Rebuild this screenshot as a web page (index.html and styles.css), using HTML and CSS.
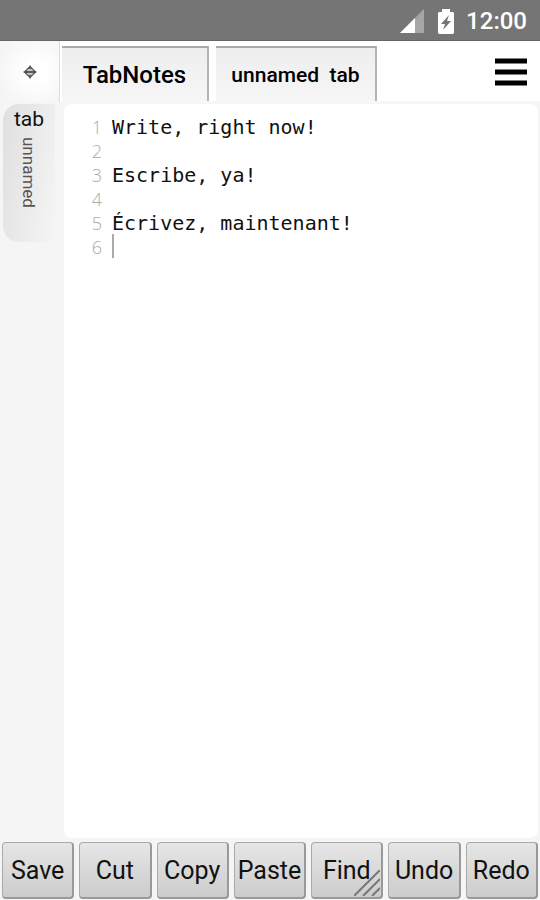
FILE: index.html
```
<!DOCTYPE html>
<html lang="en">
<head>
<meta charset="utf-8">
<meta name="viewport" content="width=device-width, initial-scale=1">
<title>TabNotes</title>
<link rel="stylesheet" href="styles.css">
</head>
<body>
<div class="app">
  <div class="status">
    <svg class="signal" viewBox="0 0 24 24" aria-hidden="true"><path d="M24 0V24H0Z" fill="#a6a6a6"/><path d="M15 9V24H0Z" fill="#fff"/></svg>
    <svg class="battery" viewBox="0 0 16 25" aria-hidden="true"><path d="M4 0H12V3H15L16 4V24L15 25H1L0 24V4L1 3H4Z" fill="#fff"/><path d="M11 6L3 15H7L5 21L13 12H9Z" fill="#757575"/></svg>
    <time>12:00</time>
  </div>
  <header class="tabs">
    <button class="locate" type="button" aria-label="Move">
      <svg viewBox="0 0 14 14" aria-hidden="true"><path d="M7 0L9 3H5ZM7 14L5 11H9ZM0 7L3 5V9ZM14 7L11 5V9Z" fill="#555"/><circle cx="7" cy="7" r="4" fill="#c4c4c4" stroke="#555" stroke-width="1.4"/><path d="M3 7H11" stroke="#444" stroke-width="1.6"/></svg>
    </button>
    <button class="tab tab-main" type="button">TabNotes</button>
    <button class="tab tab-note" type="button">unnamed&nbsp; tab</button>
    <button class="menu" type="button" aria-label="Menu">
      <svg viewBox="0 0 34 30" aria-hidden="true"><path d="M1 4H33M1 15H33M1 26H33" stroke="#000" stroke-width="5"/></svg>
    </button>
  </header>
  <main class="workspace">
    <nav class="side">
      <button class="side-tab" type="button"><span>tab</span><span class="vertical">unnamed</span></button>
    </nav>
    <section class="editor">
      <ol class="lines"><li>1</li><li>2</li><li>3</li><li>4</li><li>5</li><li>6</li></ol>
      <div class="page">
        <textarea aria-label="Note" spellcheck="false">Write, right now!

Escribe, ya!

Écrivez, maintenant!
</textarea>
        <span class="caret"></span>
      </div>
    </section>
  </main>
  <footer class="toolbar">
    <button type="button">Save</button>
    <button type="button">Cut</button>
    <button type="button">Copy</button>
    <button type="button">Paste</button>
    <button type="button">Find<svg class="grip" viewBox="0 0 26 26" aria-hidden="true"><path d="M0 26L26 0M9 26L26 9M18 26L26 18" stroke="#777" stroke-width="2"/></svg></button>
    <button type="button">Undo</button>
    <button type="button">Redo</button>
  </footer>
</div>
</body>
</html>
```
FILE: styles.css
```
* { box-sizing: border-box; }
body { margin: 0; font-family: Roboto, "Liberation Sans", sans-serif; color: #111; }
button { margin: 0; padding: 0; border: 0; background: none; font: inherit; color: inherit; }
svg { display: block; }
.app { display: flex; flex-direction: column; min-height: 100vh; background: #f5f5f5; }

.status {
  display: flex; align-items: center; justify-content: flex-end;
  height: 41px; padding: 2px 13px 0 0; background: #757575; border-bottom: 1px solid #666;
  color: #fff; font-size: 24px; font-weight: 500;
}
.signal { width: 24px; height: 24px; margin-right: 14px; }
.battery { width: 16px; height: 25px; margin-right: 12px; }

.tabs { display: flex; height: 61px; padding-top: 5px; background: #fff; border-bottom: 1px solid #f8f8f8; }
.locate {
  display: grid; place-items: center; width: 60px; margin: -5px 2px -1px 0;
  border-right: 1px solid #ddd; background: radial-gradient(circle at 60% 50%, #fff 20%, #f4f4f4 90%);
}
.locate svg { width: 14px; height: 14px; }
.tab {
  border-top: 2px solid #aaa; border-right: 2px solid #b4b4b4;
  background: linear-gradient(#eee, #f6f6f6); color: #000; font-weight: 500;
}
.tab-main { width: 147px; margin-right: 7px; font-size: 24px; }
.tab-note { width: 161px; font-size: 21px; }
.menu { margin: 0 12px 4px auto; }
.menu svg { width: 34px; height: 30px; }

.workspace { flex: 1; display: flex; padding: 2px 2px 4px 0; }
.side { width: 64px; flex: none; }
.side-tab {
  display: flex; flex-direction: column; align-items: center; gap: 6px;
  width: 52px; height: 138px; margin-left: 3px; padding-top: 3px;
  border-radius: 16px 0 0 16px; background: linear-gradient(100deg, #dfdfdf, #f5f5f5);
  font-size: 21px; line-height: 24px;
}
.vertical { writing-mode: vertical-rl; font-size: 17px; line-height: 20px; color: #555; }
.editor { flex: 1; display: flex; min-width: 0; padding: 11px 8px; border-radius: 8px; background: #fff; }
.lines {
  width: 30px; margin: 0; padding: 0; list-style: none; text-align: right;
  font: 300 18px/24px "Open Sans", sans-serif; color: #aaa;
}
.page { position: relative; flex: 1; display: flex; margin-left: 10px; }
textarea {
  flex: 1; min-width: 0; padding: 0; border: 0; outline: 0; resize: none; background: transparent;
  font: 20px/24px "DejaVu Sans Mono", monospace; color: #111;
}
.caret { position: absolute; top: 119px; left: 0; width: 2px; height: 24px; background: #aaa; }

.toolbar { display: grid; grid-template-columns: repeat(7, minmax(0, 1fr)); gap: 5px; padding: 0 2px 1px; }
.toolbar button {
  position: relative; height: 57px; padding-top: 1px;
  border: 1px solid #aaa; border-right: 2px solid #999; border-bottom: 2px solid #999;
  border-radius: 4px; background: linear-gradient(#e6e6e6, #ccc); font-size: 25px;
}
.grip { position: absolute; right: 1px; bottom: 1px; width: 26px; height: 26px; }
```
